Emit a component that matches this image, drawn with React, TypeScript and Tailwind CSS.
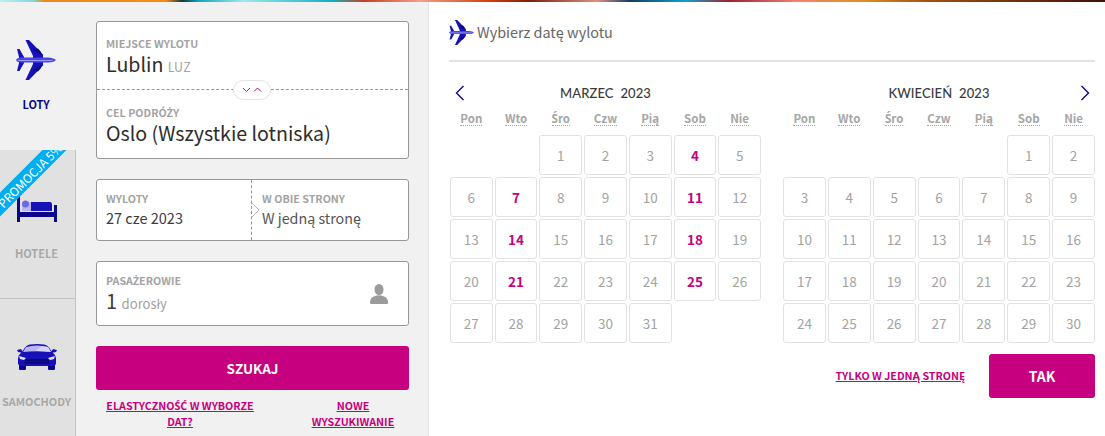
import React from 'react';

const SANS = "font-['Noto_Sans_CJK_SC','Noto_Sans',sans-serif]";

const weekDays = ['Pon', 'Wto', 'Śro', 'Czw', 'Pią', 'Sob', 'Nie'];
const activeDays = [4, 7, 11, 14, 18, 21, 25];

// Ś, Ć and Ż come out broken in the CJK face, so they get Noto Sans
const Acc: React.FC<{ children: React.ReactNode }> = ({ children }) => (
  <span className="font-['Noto_Sans',sans-serif]">{children}</span>
);

const Plane: React.FC<{ className?: string }> = ({ className }) => (
  <svg viewBox="0 0 40 40" className={className}>
    {/* wings */}
    <path d="M9.5 0 L13 0 L27 14.5 L27 25.5 L13 40 L9.5 40 L17 24 L17 16 Z" fill="#1712b8" />
    <path d="M17 10 L22 8.5 L25 12 L25 15 Z M17 30 L22 31.5 L25 28 L25 25 Z" fill="#0d0a80" />
    {/* tail */}
    <path d="M1 9 L3.5 9 L8 17 L8 23 L3.5 31 L1 31 L3 23 L3 17 Z" fill="#1712b8" />
    {/* body */}
    <path d="M0 20 Q1 17.5 5 17.5 L32 17.5 Q38 18 40 20 Q38 22.5 32 22.5 L5 22.5 Q1 22.5 0 20 Z" fill="#4a45e8" />
    <path d="M1 20 L38 20 L35 21 L3 21 Z" fill="#9d9af5" />
  </svg>
);

const Bed = () => (
  <svg viewBox="0 0 40 26" className="w-10 h-[26px]">
    <path d="M0 0 H3 V16 H37 V9 H40 V26 H37 V21 H3 V26 H0 Z" fill="#0b0788" />
    <rect x="5" y="6" width="10" height="9" rx="1" fill="#b8b5ee" />
    <circle cx="8.5" cy="8" r="3.5" fill="#6d69e0" />
    <path d="M14 6 H33 Q35 6 35 9 V15 H14 Z" fill="#1712b8" />
  </svg>
);

const Car = () => (
  <svg viewBox="0 0 40 26" className="w-10 h-[26px]">
    <rect x="2" y="20" width="7" height="6" rx="1" fill="#0b0788" />
    <rect x="31" y="20" width="7" height="6" rx="1" fill="#0b0788" />
    <path d="M0 6 L4 5 L6 8 L6 9 L1 8 Z M40 6 L36 5 L34 8 L34 9 L39 8 Z" fill="#1712b8" />
    <path d="M7 5 Q9 1 13 0.5 Q20 -0.5 27 0.5 Q31 1 33 5 L36 9 Q39 11 39 14 L39 20 Q38 22 35 22 L5 22 Q2 22 1 20 L1 14 Q1 11 4 9 Z" fill="#1712b8" />
    <path d="M6 8 L9 3 Q20 0 31 3 L34 8 Q20 6.5 6 8 Z" fill="#b8b5f2" />
    <path d="M18 7 L25 2 L31 3 L34 8 Q26 7 18 7 Z" fill="#d5d3f8" />
    <path d="M2 12 L9 14 L7 16 L3 15 Z M38 12 L31 14 L33 16 L37 15 Z" fill="#e4e3fb" />
    <path d="M9 15 H31 L33 19 Q33 20 31 20 H9 Q7 20 7 19 Z" fill="#0d0a80" />
  </svg>
);

const Person = () => (
  <svg viewBox="0 0 18 20" className="w-[18px] h-5">
    <ellipse cx="9" cy="5.5" rx="4.5" ry="5.5" fill="#9b9b9b" />
    <path d="M0 19 Q0 13.5 4 12.5 Q9 10 14 12.5 Q18 13.5 18 19 Q18 20 17 20 H1 Q0 20 0 19 Z" fill="#9b9b9b" />
  </svg>
);

const Label: React.FC<{ children: React.ReactNode }> = ({ children }) => (
  <p className="text-[10.7px] leading-[14px] font-bold text-[#a3a3a3]">{children}</p>
);

const Chevron: React.FC<{ dir: 'left' | 'right' }> = ({ dir }) => (
  <svg viewBox="0 0 10 16" className="w-2.5 h-4">
    <path d={dir === 'left' ? 'M8.5 1 L1.5 8 L8.5 15' : 'M1.5 1 L8.5 8 L1.5 15'} fill="none" stroke="#0b0788" strokeWidth="1.4" />
  </svg>
);

interface MonthProps {
  title: string;
  offset: number;
  days: number;
  arrow: 'left' | 'right';
  highlight?: number[];
  className?: string;
}

const Month: React.FC<MonthProps> = ({ title, offset, days, arrow, highlight = [], className }) => (
  <div className={className}>
    <div className="flex items-center justify-between h-[20px] px-[5px]">
      {arrow === 'left' ? <Chevron dir="left" /> : <span className="w-2.5" />}
      <h3 className="mt-[1px] font-['Lato',sans-serif] text-[13px] font-medium tracking-[0.1px] text-[#3a3a3a] whitespace-pre">{title}</h3>
      {arrow === 'right' ? <Chevron dir="right" /> : <span className="w-2.5" />}
    </div>
    <div className="grid grid-cols-7 gap-x-[2px] mt-[5px] h-[20px]">
      {weekDays.map((d) => (
        <div key={d} className="text-center leading-[16px]">
          <abbr className="text-[11.5px] font-bold text-[#a6a6a6] no-underline border-b border-dotted border-[#a6a6a6] inline-block leading-[13px]">
            {d === 'Śro' ? (
              <>
                <Acc>Ś</Acc>ro
              </>
            ) : (
              d
            )}
          </abbr>
        </div>
      ))}
    </div>
    <div className="grid grid-cols-7 gap-x-[2px] gap-y-[2px] mt-[7px]">
      {Array.from({ length: offset }).map((_, i) => (
        <span key={`e${i}`} />
      ))}
      {Array.from({ length: days }).map((_, i) => {
        const day = i + 1;
        const on = highlight.includes(day);
        return (
          <div
            key={day}
            className={`h-[40px] flex items-center justify-center rounded-[3px] border border-[#e2e2e2] text-[13.5px] ${
              on ? 'font-bold text-[#c6007e]' : 'text-[#a3a3a3]'
            }`}
          >
            {day}
          </div>
        );
      })}
    </div>
  </div>
);

export default function App() {
  return (
    <div className={`w-[1105px] h-[436px] overflow-hidden bg-white flex flex-col ${SANS}`}>
      <div className="h-[2px] shrink-0 bg-[linear-gradient(90deg,#bfeef0_0%,#7fd8de_3%,#e88a20_4%,#f58a10_15%,#0a3a40_16.5%,#10a8b8_18%,#9fe8ee_22%,#10b0c0_30%,#c84020_33%,#f0a090_38%,#d84010_44%,#7a2010_48%,#e09080_54%,#104060_57%,#10a0d0_62%,#a02030_66%,#f08070_72%,#e09020_78%,#a05010_84%,#401008_100%)]" />
      <div className="flex flex-1 min-h-0">
        {/* tabs */}
        <div className="w-[76px] shrink-0 flex flex-col">
          <div className="h-[148px] bg-[#f1f1f1] flex flex-col items-center pt-[38px] pr-[4px]">
            <Plane className="w-10 h-10" />
            <span className="mt-[17px] text-[11px] leading-[14px] font-bold text-[#0b0788]">LOTY</span>
          </div>
          <div className="relative h-[149px] bg-[#e1e1e1] border-r border-b border-[#c4c4c4] overflow-hidden flex flex-col items-center pt-[46px] pr-[2px]">
            <div className="absolute left-[-34px] top-[20px] w-[120px] h-[17px] bg-[#00aeef] -rotate-45 flex items-center justify-center text-white text-[12px] leading-none whitespace-nowrap pl-[10px]">
              PROMOCJA 5%
            </div>
            <Bed />
            <span className="mt-[24px] text-[11px] leading-[14px] font-bold text-[#a8a8a8]">HOTELE</span>
          </div>
          <div className="flex-1 bg-[#e1e1e1] border-r border-[#c4c4c4] flex flex-col items-center pt-[45px] pr-[2px]">
            <Car />
            <span className="mt-[24px] text-[10.9px] leading-[14px] font-bold text-[#a8a8a8]">SAMOCHODY</span>
          </div>
        </div>

        {/* search form */}
        <div className="w-[353px] shrink-0 bg-[#f1f1f1] border-r border-[#e6e6e6] pl-5 pr-[19px] pt-[19px]">
          <div className="relative h-[138px] bg-white rounded-[3px] border border-[#979797]">
            <div className="h-[68px] border-b border-dashed border-[#979797] pl-[9px] pt-[15px]">
              <Label>MIEJSCE WYLOTU</Label>
              <p className="text-[19.6px] leading-[26px] text-[#2c2c2c]">
                Lublin <span className="text-[12.5px] text-[#a3a3a3]">LUZ</span>
              </p>
            </div>
            <div className="pl-[9px] pt-[16px]">
              <Label>
                CEL PODRÓ<Acc>Ż</Acc>Y
              </Label>
              <p className="text-[19.6px] leading-[26px] text-[#2c2c2c]">Oslo (Wszystkie lotniska)</p>
            </div>
            <div className="absolute left-[136px] top-[58px] w-[38px] h-[20px] rounded-full bg-white border border-[#e4e4e4] flex items-center justify-center">
              <svg viewBox="0 0 20 6" className="w-5 h-1.5">
                <path d="M1 1 L4.5 4.5 L8 1 M12 4.5 L15.5 1 L19 4.5" fill="none" stroke="#c6007e" strokeWidth="1" />
              </svg>
            </div>
          </div>

          <div className="relative mt-5 h-[62px] bg-white rounded-[3px] border border-[#979797] flex">
            <div className="w-[155px] border-r border-dashed border-[#979797] pl-[9px] pt-[12px]">
              <Label>WYLOTY</Label>
              <p className="mt-[2px] text-[14.5px] leading-[20px] text-[#3c3c3c]">27 cze 2023</p>
            </div>
            <div className="pl-[10px] pt-[12px]">
              <Label>W OBIE STRONY</Label>
              <p className="mt-[2px] text-[14.3px] leading-[20px] text-[#555555]">W jedną stronę</p>
            </div>
            <svg viewBox="0 0 8 14" className="absolute left-[155px] top-[23px] w-2 h-3.5">
              <path d="M0 0 L7 7 L0 14" fill="#ffffff" stroke="#b5b5b5" strokeWidth="1" />
            </svg>
          </div>

          <div className="mt-5 h-[65px] bg-white rounded-[3px] border border-[#979797] pl-[9px] pr-[20px] flex items-center justify-between">
            <div className="pt-[3px]">
              <Label>
                PASA<Acc>Ż</Acc>EROWIE
              </Label>
              <p className="text-[20px] leading-[26px] text-[#3c3c3c]">
                1 <span className="text-[13.1px] text-[#a3a3a3]">dorosły</span>
              </p>
            </div>
            <Person />
          </div>

          <button className="mt-5 w-full h-[44px] bg-[#c6007e] rounded-[3px] text-white text-[13.5px] font-bold">SZUKAJ</button>

          <div className="mt-[8px] flex text-[10.7px] leading-[16px] font-bold text-[#c6007e] text-center underline">
            <a className="w-[168px]">
              ELASTYCZNO<Acc>ŚĆ</Acc> W WYBORZE DAT?
            </a>
            <a className="w-[84px] ml-[47px]">NOWE WYSZUKIWANIE</a>
          </div>
        </div>

        {/* calendar */}
        <div className="flex-1 pl-5 pr-[10px] pt-[18px]">
          <div className="h-[42px] border-b-2 border-[#e2e2e2] flex items-start">
            <Plane className="w-[25px] h-[25px]" />
            <span className="ml-[3px] text-[14.4px] leading-[24px] text-[#666666]">Wybierz datę wylotu</span>
          </div>
          <div className="flex justify-between mt-[21px]">
            <Month className="w-[311px] ml-px" title="MARZEC  2023" offset={2} days={31} arrow="left" highlight={activeDays} />
            <Month className="w-[312px]" title="KWIECIEŃ  2023" offset={5} days={30} arrow="right" />
          </div>
          <div className="flex justify-end items-center mt-[11px]">
            <a className="text-[10.7px] font-bold text-[#c6007e] underline mr-6">TYLKO W JEDNĄ STRONĘ</a>
            <button className="w-[106px] h-[44px] bg-[#c6007e] rounded-[3px] text-white text-[14px] font-bold">TAK</button>
          </div>
        </div>
      </div>
    </div>
  );
}
